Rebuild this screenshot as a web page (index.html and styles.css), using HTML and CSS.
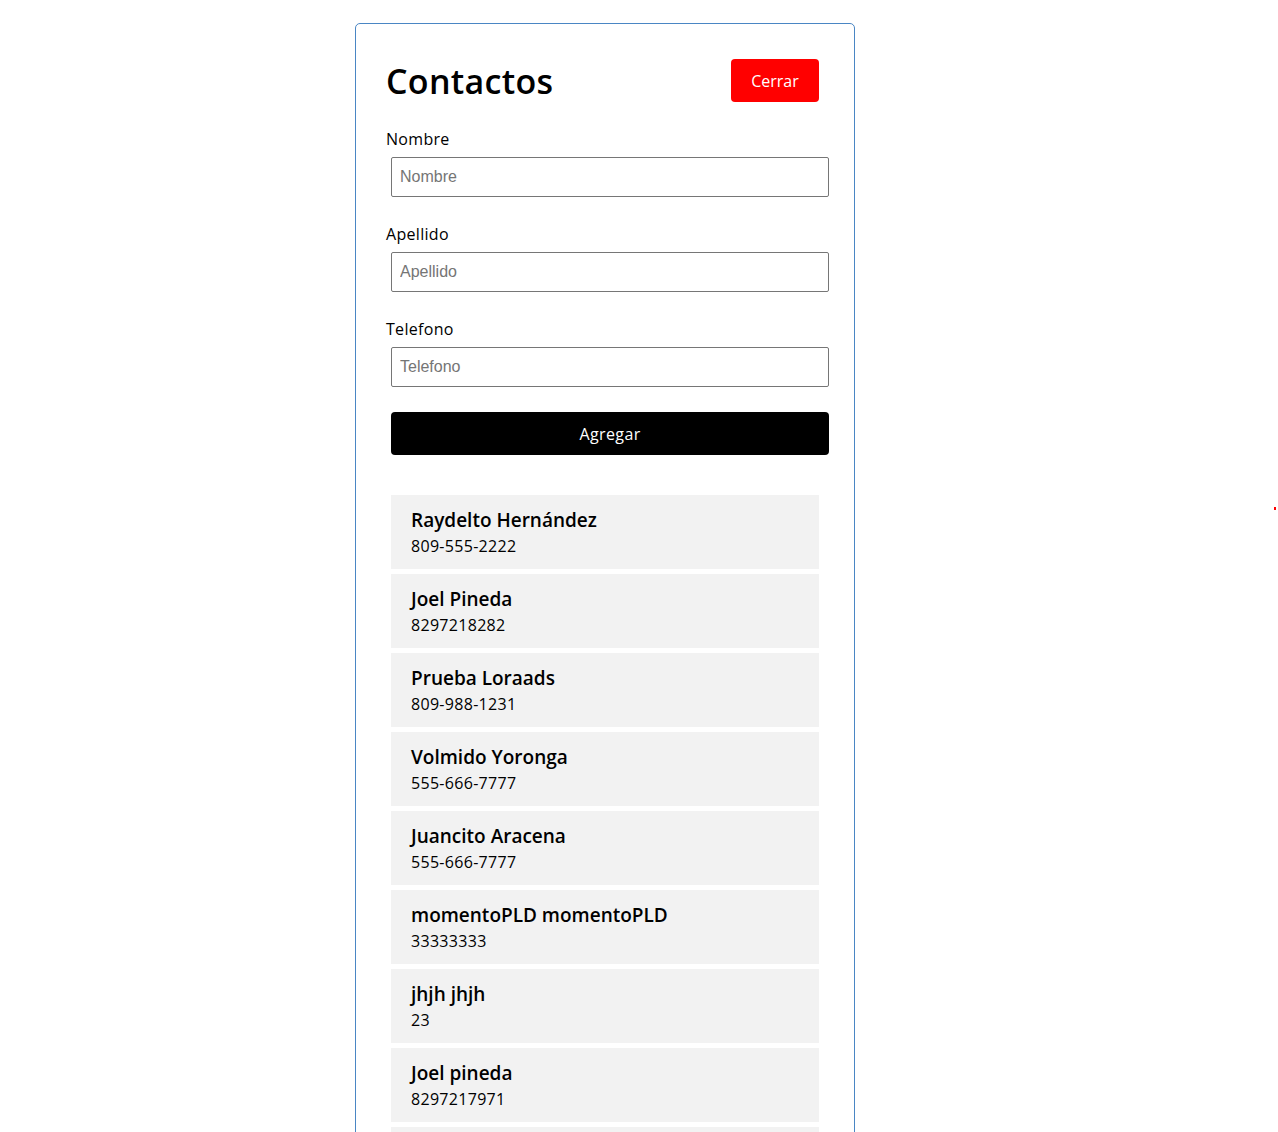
FILE: index.html
```html
<!DOCTYPE html>
<html lang="es">
<head>
<meta charset="utf-8">
<title>Contactos</title>
<link rel="stylesheet" href="styles.css">
</head>
<body>
<div class="page">
  <div class="card">
    <div class="header">
      <h1 class="title">Contactos</h1>
      <button class="btn-close">Cerrar</button>
    </div>
    <form class="form">
      <div class="group">
        <label class="label">Nombre</label>
        <input class="input" type="text" placeholder="Nombre">
      </div>
      <div class="group">
        <label class="label">Apellido</label>
        <input class="input" type="text" placeholder="Apellido">
      </div>
      <div class="group">
        <label class="label">Telefono</label>
        <input class="input" type="text" placeholder="Telefono">
      </div>
      <button type="button" class="btn-add">Agregar</button>
    </form>
    <ul class="list">
      <li class="item"><div class="name">Raydelto Hernández</div><div class="phone">809-555-2222</div></li>
      <li class="item"><div class="name">Joel Pineda</div><div class="phone">8297218282</div></li>
      <li class="item"><div class="name">Prueba Loraads</div><div class="phone">809-988-1231</div></li>
      <li class="item"><div class="name">Volmido Yoronga</div><div class="phone">555-666-7777</div></li>
      <li class="item"><div class="name">Juancito Aracena</div><div class="phone">555-666-7777</div></li>
      <li class="item"><div class="name">momentoPLD momentoPLD</div><div class="phone">33333333</div></li>
      <li class="item"><div class="name">jhjh jhjh</div><div class="phone">23</div></li>
      <li class="item"><div class="name">Joel pineda</div><div class="phone">8297217971</div></li>
      <li class="item item-empty"></li>
    </ul>
  </div>
</div>
<span class="dot"></span>
</body>
</html>
```

FILE: styles.css
```css
html, body {
  margin: 0;
  padding: 0;
  background: #ffffff;
}
body {
  font-family: "Open Sans", "Noto Sans", sans-serif;
  color: #000;
  overflow: hidden;
}
.page {
  padding: 23px 0 0 355px;
}
.card {
  width: 438px;
  padding: 30px 30px 30px 30px;
  border: 1px solid #4a86c4;
  border-radius: 5px;
}
.header {
  display: flex;
  justify-content: space-between;
  align-items: center;
  height: 53px;
  margin-bottom: 20px;
}
.title {
  margin: 0;
  font-size: 34px;
  font-weight: 600;
  letter-spacing: 0.3px;
  line-height: 40px;
}
.btn-close {
  margin: 5px;
  width: 88px;
  height: 43px;
  border: none;
  border-radius: 4px;
  background: #ff0000;
  color: #fff;
  font-family: "Open Sans", "Noto Sans", sans-serif;
  font-size: 16px;
  cursor: pointer;
}
.form {
  display: flex;
  flex-direction: column;
}
.group {
  display: flex;
  flex-direction: column;
  margin-bottom: 25px;
}
.label {
  font-size: 16px;
  letter-spacing: 0.3px;
  line-height: 24px;
  margin-bottom: 6px;
}
.input {
  box-sizing: border-box;
  margin: 0 0 0 5px;
  width: 438px;
  height: 40px;
  padding: 0 8px;
  border: 1px solid #767676;
  border-radius: 2px;
  font-family: "Liberation Sans", Arial, sans-serif;
  font-size: 16px;
}
.input::placeholder {
  color: #757575;
}
.btn-add {
  margin: 0 0 0 5px;
  width: 438px;
  height: 43px;
  border: none;
  border-radius: 4px;
  background: #000;
  color: #fff;
  font-family: "Open Sans", "Noto Sans", sans-serif;
  font-size: 16px;
  letter-spacing: 0.4px;
  cursor: pointer;
}
.list {
  list-style: none;
  margin: 40px 5px 0 5px;
  padding: 0;
  display: flex;
  flex-direction: column;
  gap: 5px;
}
.item {
  background: #f2f2f2;
  padding: 11px 20px;
}
.item-empty {
  height: 52px;
}
.name {
  font-size: 19px;
  font-weight: 600;
  line-height: 28px;
}
.phone {
  font-size: 16px;
  line-height: 24px;
  letter-spacing: 0.3px;
}
.dot {
  position: absolute;
  left: 1274px;
  top: 507px;
  width: 2px;
  height: 3px;
  background: #ff0000;
}
```
